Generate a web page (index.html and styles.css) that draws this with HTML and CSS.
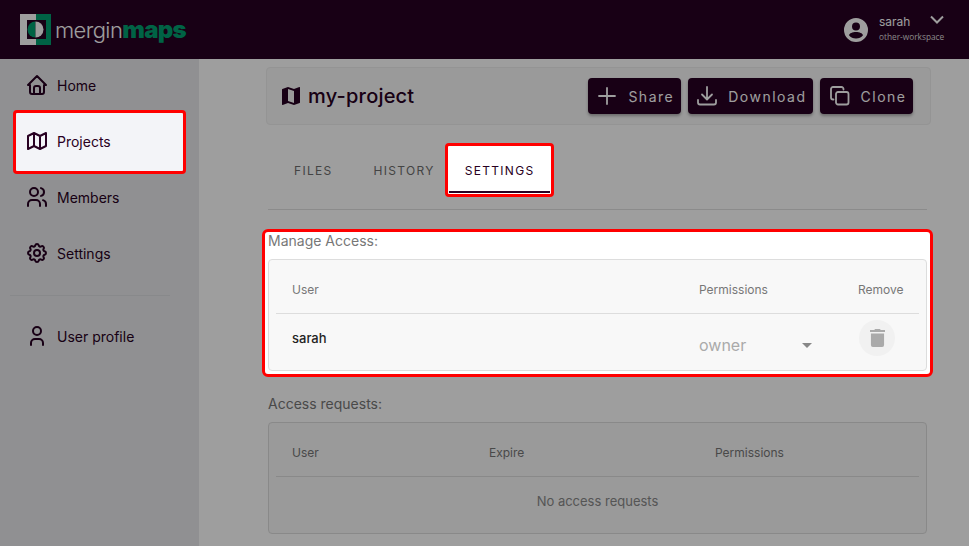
FILE: index.html
```html
<!DOCTYPE html>
<html>
  <head>
    <title>my-project settings</title>
    <link rel="stylesheet" href="styles.css">
  </head>
  <body>
    <header class="topbar">
      <div class="logo">
        <svg class="logo-mark" width="31" height="31" viewBox="0 0 31 31">
          <rect width="16" height="31" fill="#fff"/>
          <rect x="16" width="15" height="31" fill="#00a070"/>
          <rect x="7" y="6" width="19" height="19" fill="#280022"/>
          <path d="M15.500 7.500a8 8 0 0 0 0 16z" fill="#00a070"/>
          <path d="M15.500 7.500a8 8 0 0 1 0 16z" fill="#fff"/>
        </svg>
        <span class="logo-text">mergin<b>maps</b></span>
      </div>
      <div class="account">
        <svg width="24" height="24" viewBox="0 0 24 24">
          <path fill="#fff" d="M12 0a12 12 0 1 0 0 24 12 12 0 0 0 0-24zm0 4.500a4 4 0 1 1 0 8 4 4 0 0 1 0-8zm0 9.500c3.600 0 6.600 1.300 7 3.200a8.900 8.900 0 0 1-7 3.300 8.900 8.900 0 0 1-7-3.300c.4-1.900 3.400-3.200 7-3.200z"/>
        </svg>
        <div class="account-names">
          <div class="account-name">sarah</div>
          <div class="account-workspace">other-workspace</div>
        </div>
        <svg class="account-arrow" width="14" height="14" viewBox="0 0 14 14"><path d="M1 3.500l6 6 6-6" fill="none" stroke="#fff" stroke-width="2"/></svg>
      </div>
    </header>

    <div class="page">
      <nav class="sidebar">
        <a class="nav-item">
          <svg class="nav-icon" viewBox="0 0 24 24"><path d="M5 12H3l9-9 9 9h-2M5 12v7a2 2 0 0 0 2 2h10a2 2 0 0 0 2-2v-7M9 21v-6a2 2 0 0 1 2-2h2a2 2 0 0 1 2 2v6"/></svg>
          Home
        </a>
        <a class="nav-item nav-active">
          <svg class="nav-icon" viewBox="0 0 24 24"><path d="M3 7l6-3 6 3 6-3v13l-6 3-6-3-6 3V7M9 4v13M15 7v13"/></svg>
          Projects
        </a>
        <a class="nav-item">
          <svg class="nav-icon" viewBox="0 0 24 24"><circle cx="9" cy="7" r="4"/><path d="M3 21v-2a4 4 0 0 1 4-4h4a4 4 0 0 1 4 4v2M16 3.130a4 4 0 0 1 0 7.750M21 21v-2a4 4 0 0 0-3-3.850"/></svg>
          Members
        </a>
        <a class="nav-item">
          <svg class="nav-icon" viewBox="0 0 24 24"><path d="M10.325 4.317c.426-1.756 2.924-1.756 3.350 0a1.724 1.724 0 0 0 2.573 1.066c1.543-.94 3.310.826 2.370 2.370a1.724 1.724 0 0 0 1.065 2.572c1.756.426 1.756 2.924 0 3.350a1.724 1.724 0 0 0-1.066 2.573c.94 1.543-.826 3.310-2.370 2.370a1.724 1.724 0 0 0-2.572 1.065c-.426 1.756-2.924 1.756-3.350 0a1.724 1.724 0 0 0-2.573-1.066c-1.543.94-3.310-.826-2.370-2.370a1.724 1.724 0 0 0-1.065-2.572c-1.756-.426-1.756-2.924 0-3.350a1.724 1.724 0 0 0 1.066-2.573c-.94-1.543.826-3.310 2.370-2.370 1 .608 2.296.07 2.572-1.065z"/><circle cx="12" cy="12" r="3"/></svg>
          Settings
        </a>
        <div class="nav-divider"></div>
        <a class="nav-item">
          <svg class="nav-icon" viewBox="0 0 24 24"><circle cx="12" cy="7" r="4"/><path d="M6 21v-2a4 4 0 0 1 4-4h4a4 4 0 0 1 4 4v2"/></svg>
          User profile
        </a>
      </nav>

      <main class="content">
        <div class="project-bar">
          <h1 class="project-title">
            <svg width="24" height="24" viewBox="0 0 24 24"><path fill="#280022" d="M20.500 3l-.16.03L15 5.100 9 3 3.360 4.900c-.21.07-.36.25-.36.48V20.500c0 .28.22.5.5.5l.16-.03L9 18.900l6 2.100 5.640-1.900c.21-.07.36-.25.36-.48V3.500c0-.28-.22-.5-.5-.5zM15 19l-6-2.110V5l6 2.110V19z"/></svg>
            my-project
          </h1>
          <div class="actions">
            <button class="btn">
              <svg width="20" height="20" viewBox="0 0 20 20"><path d="M10 2v16M2 10h16"/></svg>
              <span>Share</span>
            </button>
            <button class="btn">
              <svg width="20" height="20" viewBox="0 0 20 20"><path d="M10 1v12M5 8.500l5 5 5-5M1 14v2.500a2 2 0 0 0 2 2h14a2 2 0 0 0 2-2V14"/></svg>
              <span>Download</span>
            </button>
            <button class="btn">
              <svg width="20" height="20" viewBox="0 0 20 20"><rect x="6" y="6" width="12.500" height="12.500" rx="2"/><path d="M13.500 3.500V3a2 2 0 0 0-2-2H3a2 2 0 0 0-2 2v8.500a2 2 0 0 0 2 2h.500"/></svg>
              <span>Clone</span>
            </button>
          </div>
        </div>

        <div class="tabs">
          <a class="tab">FILES</a>
          <a class="tab">HISTORY</a>
          <a class="tab tab-active">SETTINGS</a>
        </div>

        <section class="access access-highlight">
          <h2 class="section-title">Manage Access:</h2>
          <div class="card">
            <div class="row row-head row-manage">
              <span>User</span>
              <span>Permissions</span>
              <span>Remove</span>
            </div>
            <div class="row row-manage row-user">
              <span class="user-name">sarah</span>
              <div class="select"><span>owner</span><i class="caret"></i></div>
              <button class="trash">
                <svg width="15" height="18" viewBox="0 0 16 18" preserveAspectRatio="none"><path fill="#aaa" d="M5.500 0h5l1 1H16v2H0V1h4.500zM1 4.500h14V16a2 2 0 0 1-2 2H3a2 2 0 0 1-2-2z"/></svg>
              </button>
            </div>
          </div>
        </section>

        <section class="access">
          <h2 class="section-title">Access requests:</h2>
          <div class="card">
            <div class="row row-head row-requests">
              <span>User</span>
              <span>Expire</span>
              <span>Permissions</span>
            </div>
            <div class="no-data">No access requests</div>
          </div>
        </section>
      </main>
    </div>

    <div class="dim"></div>
  </body>
</html>
```

FILE: styles.css
```css
* {
  box-sizing: border-box;
}
html, body {
  height: 100%;
}
body {
  display: flex;
  flex-direction: column;
  margin: 0;
  overflow: hidden;
  font-family: Inter, sans-serif;
  color: #280022;
  background: #fff;
}

/* tutorial overlay, highlighted parts sit above it */
.dim {
  position: fixed;
  top: 0;
  right: 0;
  bottom: 0;
  left: 0;
  z-index: 1;
  background: rgba(0, 0, 0, 0.38);
}

.topbar {
  display: flex;
  flex-shrink: 0;
  justify-content: space-between;
  align-items: center;
  height: 59px;
  padding: 0 25px 0 20px;
  background: #280022;
  color: #fff;
}
.logo {
  display: flex;
  align-items: center;
  gap: 4px;
}
.logo-text {
  font-size: 22px;
  font-weight: 300;
  letter-spacing: -0.6px;
}
.logo-text b {
  font-size: 24px;
  font-weight: 900;
  letter-spacing: -0.7px;
  color: #00a070;
}
.account {
  display: flex;
  align-items: center;
}
.account-names {
  width: 65px;
  margin: -3px 0 0 11px;
}
.account-name {
  font-size: 12px;
  line-height: 17px;
}
.account-workspace {
  font-family: "Open Sans", sans-serif;
  font-size: 8.300px;
  line-height: 14px;
  white-space: nowrap;
  color: #ddd;
}
.account-arrow {
  margin: -19px 0 0 -14px;
}

.page {
  display: flex;
  flex-grow: 1;
  min-height: 0;
}

.sidebar {
  flex-shrink: 0;
  width: 199px;
  padding: 0 13px 0 0;
  background: #e8e9ec;
}
.nav-item {
  display: flex;
  align-items: center;
  gap: 8px;
  height: 56px;
  padding-left: 25px;
  font-size: 14px;
}
.sidebar .nav-item:first-child {
  margin-top: -2px;
}
.nav-icon {
  width: 24px;
  height: 24px;
  fill: none;
  stroke: #280022;
  stroke-width: 2;
  stroke-linecap: round;
  stroke-linejoin: round;
}
.nav-active {
  position: relative;
  z-index: 2;
  height: 64px;
  margin: -3px 0 -5px 13px;
  padding: 0 0 2px 9px;
  background: #f3f4f8;
  border: 3px solid #f00;
  border-radius: 4px;
}
.nav-divider {
  height: 1px;
  margin: 14px 16px 12px 10px;
  background: #dcdde0;
}

.content {
  flex-grow: 1;
  padding: 8px 38px 0 67px;
}

.project-bar {
  display: flex;
  justify-content: space-between;
  align-items: center;
  height: 58px;
  padding: 0 17px 0 12px;
  background: #f8f8f8;
  border: 1px solid #efefef;
  border-radius: 4px;
}
.project-title {
  display: flex;
  align-items: center;
  gap: 5px;
  margin: 0;
  font-size: 20px;
  font-weight: 500;
  letter-spacing: 0.2px;
}
.actions {
  display: flex;
  gap: 7px;
}
.btn {
  display: flex;
  align-items: center;
  height: 36px;
  padding: 0 6.500px 0 9.500px;
  border: 0;
  border-radius: 4px;
  font-family: Inter, sans-serif;
  font-size: 14px;
  letter-spacing: 1.500px;
  color: #fff;
  background: #280022;
  box-shadow: 0 2px 3px rgba(0, 0, 0, 0.3);
}
.btn svg {
  fill: none;
  stroke: #fff;
  stroke-width: 1.800;
  stroke-linecap: round;
  stroke-linejoin: round;
}
.btn span {
  margin-left: 11px;
}

.tabs {
  display: flex;
  gap: 1px;
  height: 85px;
  margin: 0 4px 19px 2px;
  padding: 18px 0 0 6px;
  border-bottom: 1px solid #e0e0e0;
}
.tab {
  display: flex;
  justify-content: center;
  align-items: center;
  height: 54px;
  padding: 0 20px;
  font-size: 12px;
  letter-spacing: 1.300px;
  color: #6e6e6e;
}
.tab-active {
  position: relative;
  z-index: 2;
  width: 109px;
  margin-left: -11px;
  padding: 0 0 0 1px;
  background: #fff;
  border: 3px solid #f00;
  border-radius: 4px;
  color: #280022;
}
.tab-active::after {
  content: "";
  position: absolute;
  left: 1px;
  right: 1px;
  bottom: 1px;
  height: 2px;
  background: #280022;
}

.access {
  margin: 0 4px 0 2px;
}
.access + .access {
  margin-top: 18px;
}
.access-highlight {
  position: relative;
  z-index: 2;
  margin: 0 -2px 0 -4px;
  padding: 0 3px 3px;
  background: #fff;
  border: 3px solid #f00;
  border-radius: 6px;
}
.section-title {
  margin: 0 0 9px;
  font-size: 14px;
  font-weight: 400;
  line-height: 18px;
  color: #777;
}
.card {
  padding: 0 7px;
  background: #f8f8f8;
  border: 1px solid #ddd;
  border-radius: 4px;
}
.row {
  display: grid;
  align-items: center;
  padding-left: 16px;
  font-size: 12px;
  color: #777;
}
.row-head {
  height: 54px;
  padding-top: 6px;
  border-bottom: 1px solid #ddd;
}
.row-manage {
  grid-template-columns: 407px 159px 1fr;
}
.row-requests {
  grid-template-columns: 197px 226px 1fr;
}
.row-user {
  height: 56px;
}
.user-name {
  margin-top: -8px;
  font-size: 13px;
  font-weight: 500;
  color: #222;
}
.select {
  display: flex;
  align-items: center;
  width: 113px;
  margin-top: 5px;
  font-size: 16px;
  color: #aaa;
}
.caret {
  width: 0;
  height: 0;
  margin: 2px 0 0 auto;
  border-style: solid;
  border-width: 5px 5px 0;
  border-color: #888 transparent transparent;
}
.trash {
  display: flex;
  justify-content: center;
  align-items: center;
  width: 36px;
  height: 36px;
  margin: -9px 0 0 1px;
  padding: 0;
  border: 0;
  border-radius: 50%;
  background: #f1f1f1;
}
.no-data {
  padding: 16px 0 24px;
  font-size: 13px;
  line-height: 16px;
  text-align: center;
  color: #8a8a8a;
}
```
